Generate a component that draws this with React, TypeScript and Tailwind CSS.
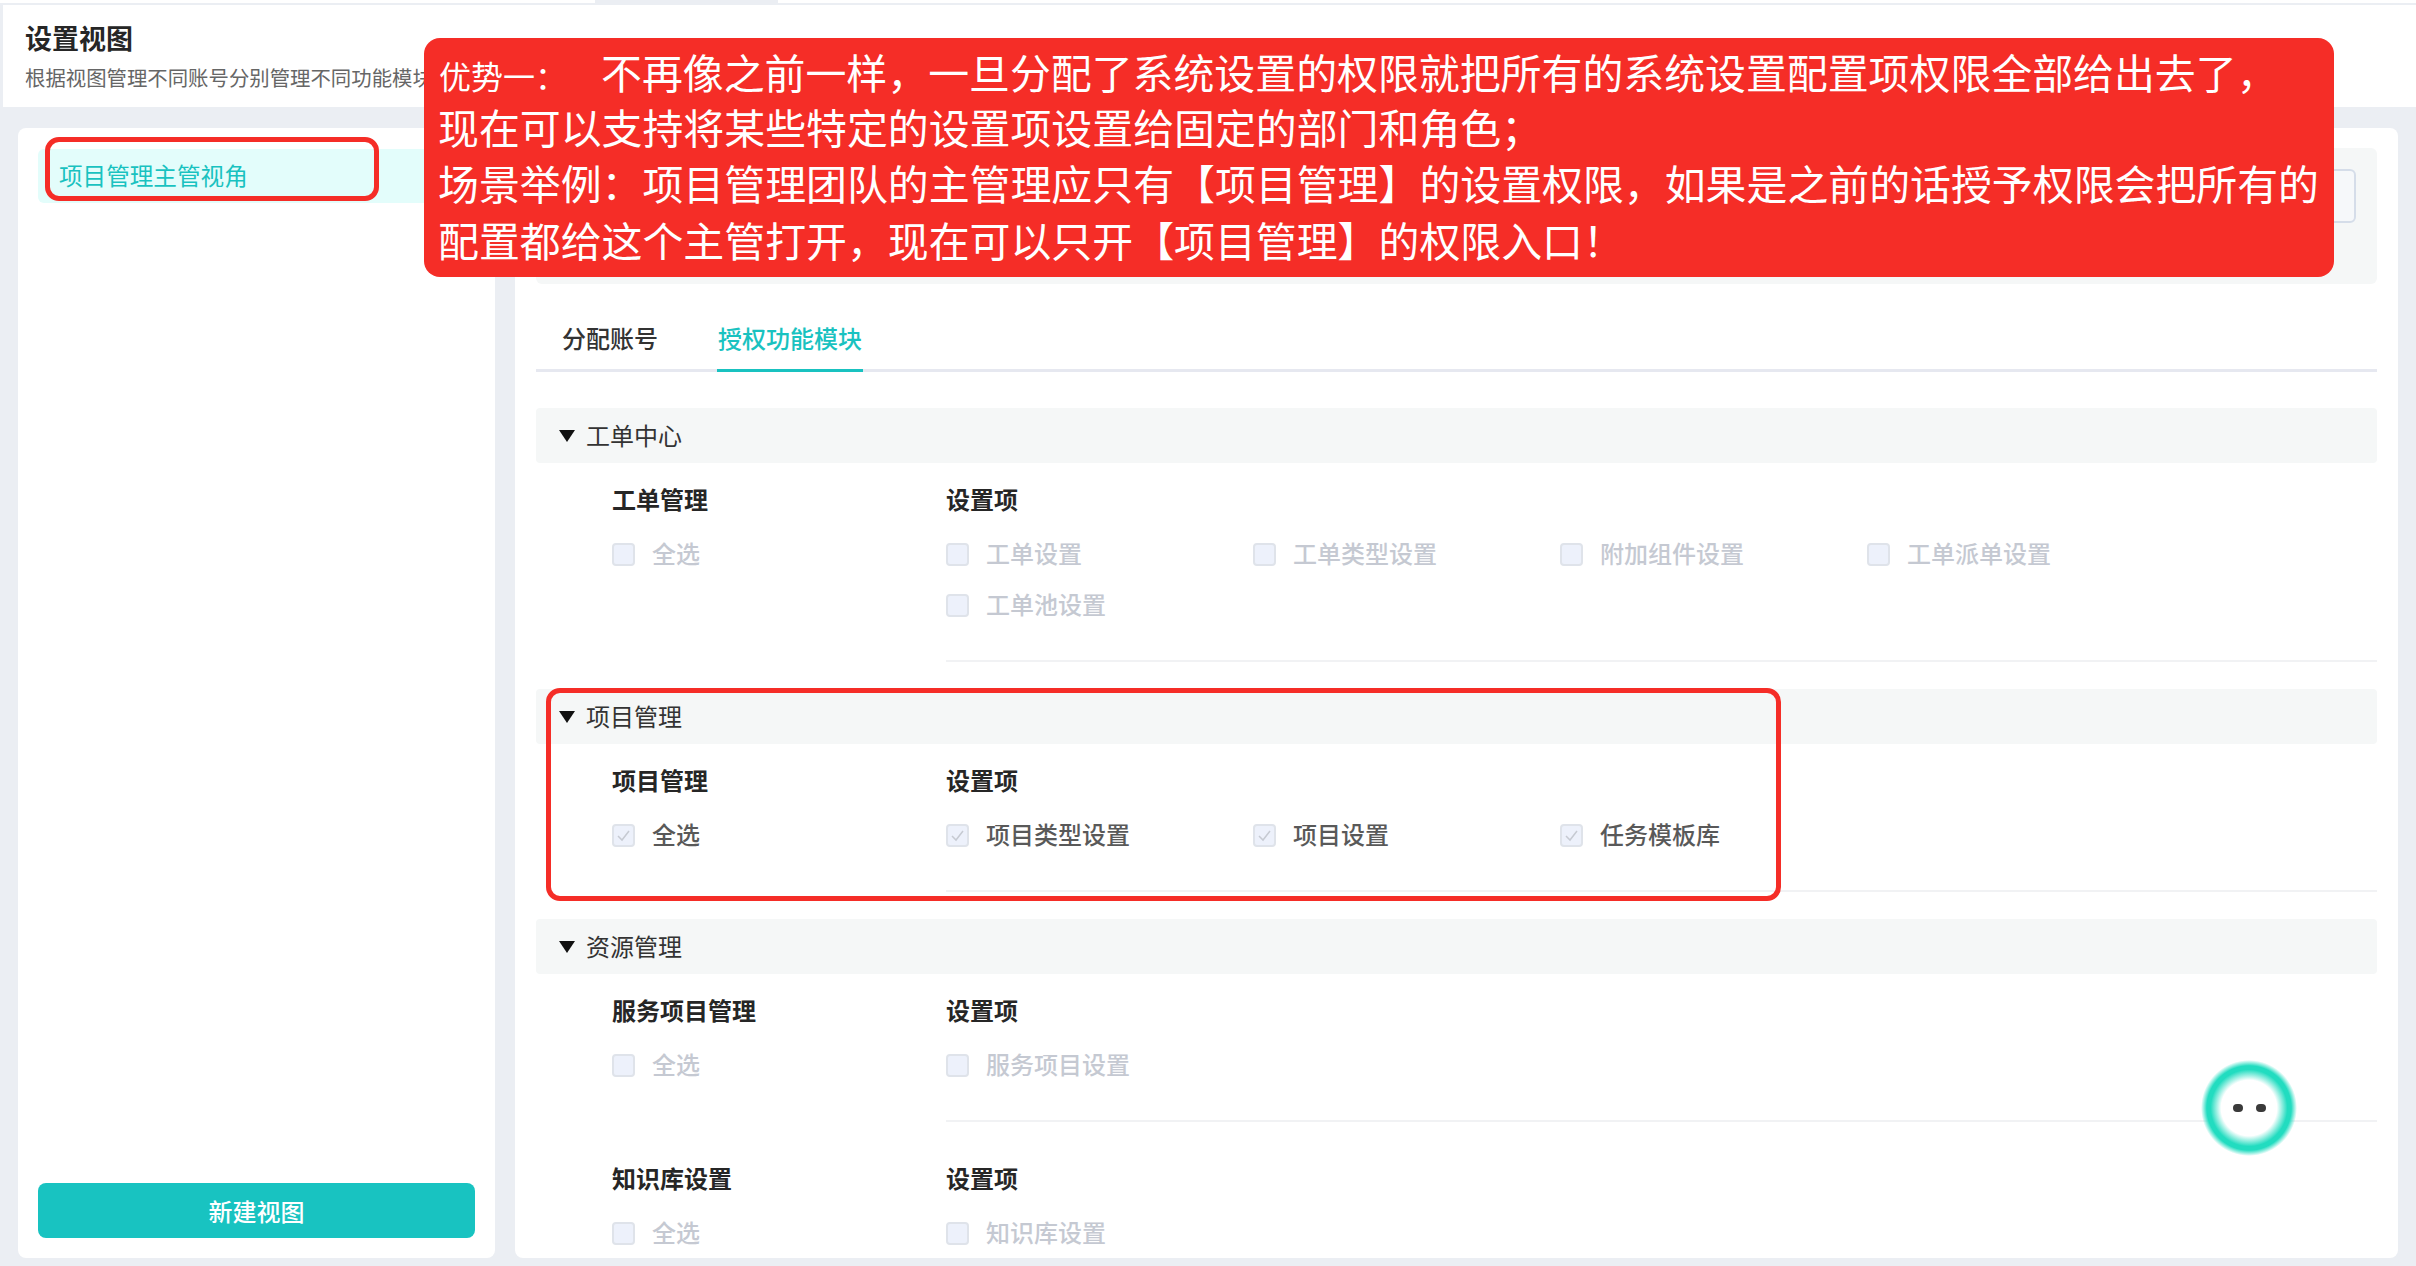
const sans = '"Noto Sans CJK SC", "Noto Sans", sans-serif';

function Check({ label, checked }: { label: string; checked: boolean }) {
  return (
    <div className="flex h-[51px] w-[307px] items-center">
      <span className="flex h-[23px] w-[23px] items-center justify-center rounded-[4px] border-2 border-[#dfe3ea] bg-[#edf1fb]">
        {checked && (
          <svg width="15" height="13" viewBox="0 0 15 13" fill="none">
            <path d="M2 7l4 4 7-9" stroke="#c6cad2" strokeWidth="1.5" />
          </svg>
        )}
      </span>
      <span className={`ml-[17px] pb-[3px] text-[24px] font-medium leading-[36px] ${checked ? 'text-[#595959]' : 'text-[#c5c9d2]'}`}>{label}</span>
    </div>
  );
}

function Block({
  name,
  items,
  checked,
  top = 18,
  pb = 29,
}: {
  name: string;
  items: string[];
  checked: boolean;
  top?: number;
  pb?: number;
}) {
  return (
    <div className={top === 18 ? 'mt-[18px] flex pl-[76px]' : 'mt-[38px] flex pl-[76px]'}>
      <div className="w-[334px] shrink-0">
        <div className="h-[36px] text-[24px] font-semibold leading-[36px] text-[#262626]">{name}</div>
        <div className="mt-[12px]">
          <Check label="全选" checked={checked} />
        </div>
      </div>
      <div className="flex-1">
        <div className="h-[36px] text-[24px] font-semibold leading-[36px] text-[#262626]">设置项</div>
        <div className={pb === 29 ? 'mt-[12px] flex flex-wrap border-b-2 border-[#f1f2f4] pb-[29px]' : 'mt-[12px] flex flex-wrap'}>
          {items.map((t) => (
            <Check key={t} label={t} checked={checked} />
          ))}
        </div>
      </div>
    </div>
  );
}

function SectionBar({ title }: { title: string }) {
  return (
    <div className="flex h-[55px] items-center rounded-[4px] bg-[#f5f7f7] pl-[23px]">
      <svg width="16" height="12" viewBox="0 0 16 12" className="shrink-0">
        <path d="M0 0h16L8 12z" fill="#111" />
      </svg>
      <span className="ml-[11px] pb-[2px] text-[24px] leading-[36px] text-[#333]">{title}</span>
    </div>
  );
}

export default function App() {
  return (
    <div className="relative flex h-[1266px] w-[2416px] flex-col overflow-hidden bg-[#ebeef3]" style={{ fontFamily: sans }}>
      <div className="flex h-[5px] shrink-0">
        <div className="h-[3px] w-[595px] bg-white" />
        <div className="h-[3px] w-[183px]" />
        <div className="h-[3px] flex-1 bg-white" />
      </div>
      <header className="ml-[3px] flex h-[102px] shrink-0 flex-col bg-white pl-[22px] pt-[13px]">
        <h1 className="text-[27px] font-semibold leading-[40px] text-[#262626]">设置视图</h1>
        <p className="mt-[4px] text-[20.4px] leading-[30px] text-[#666]">根据视图管理不同账号分别管理不同功能模块</p>
      </header>
      <div className="flex min-h-0 flex-1 gap-[20px] pb-[8px] pl-[18px] pr-[18px] pt-[21px]">
        <aside className="flex w-[477px] shrink-0 flex-col justify-between rounded-[8px] bg-white px-[20px] pb-[20px] pt-[21px]">
          <div className="flex h-[54px] items-center rounded-[6px] bg-[#e3fdfb] pl-[21px] text-[23.6px] text-[#19c2c0]">项目管理主管视角</div>
          <button className="h-[55px] rounded-[8px] bg-[#18c3c1] text-[24px] font-medium text-white">新建视图</button>
        </aside>
        <main className="min-w-0 flex-1 overflow-hidden rounded-[8px] bg-white px-[21px] pt-[20px]">
          <div className="flex h-[136px] items-start justify-end rounded-[6px] bg-[#f5f7f7] pr-[21px] pt-[21px]">
            <div className="h-[54px] w-[400px] rounded-[6px] border-2 border-[#d5dde9] bg-[#f6f8fa]" />
          </div>
          <div className="mt-[27px] flex h-[61px] items-stretch border-b-[3px] border-[#e6e8f0]">
            <div className="ml-[26px] flex w-[155px] items-center pb-[4px] text-[24px] font-medium text-[#333]">分配账号</div>
            <div className="-mb-[3px] flex w-[146px] items-center justify-center border-b-[3px] border-[#19c2c0] pb-[4px] text-[24px] font-medium text-[#19c2c0]">授权功能模块</div>
          </div>
          <div className="mt-[36px]">
            <SectionBar title="工单中心" />
            <Block name="工单管理" items={['工单设置', '工单类型设置', '附加组件设置', '工单派单设置', '工单池设置']} checked={false} />
          </div>
          <div className="mt-[27px]">
            <SectionBar title="项目管理" />
            <Block name="项目管理" items={['项目类型设置', '项目设置', '任务模板库']} checked />
          </div>
          <div className="mt-[27px]">
            <SectionBar title="资源管理" />
            <Block name="服务项目管理" items={['服务项目设置']} checked={false} />
            <Block name="知识库设置" items={['知识库设置']} checked={false} top={40} pb={0} />
          </div>
        </main>
      </div>

      {/* annotation overlays */}
      <div className="absolute left-[45px] top-[137px] h-[64px] w-[334px] rounded-[14px] border-[5px] border-[#f52d27]" />
      <div className="absolute left-[546px] top-[688px] h-[213px] w-[1235px] rounded-[14px] border-[5px] border-[#f52d27]" />
      <div className="absolute left-[424px] top-[38px] h-[239px] w-[1910px] rounded-[16px] bg-[#f52d27] pl-[14px] pt-[6px] text-[40.9px] leading-[56.4px] text-white">
        <div className="h-[55px] whitespace-nowrap leading-[55px]">
          <span className="inline-block w-[163px] pl-[1px] text-[32px] leading-[40px]">优势一：</span>不再像之前一样，一旦分配了系统设置的权限就把所有的系统设置配置项权限全部给出去了，
        </div>
        <div className="whitespace-nowrap">现在可以支持将某些特定的设置项设置给固定的部门和角色；</div>
        <div className="whitespace-nowrap">场景举例：项目管理团队的主管理应只有【项目管理】的设置权限，如果是之前的话授予权限会把所有的</div>
        <div className="whitespace-nowrap">配置都给这个主管打开，现在可以只开【项目管理】的权限入口！</div>
      </div>

      {/* floating assistant */}
      <div className="absolute left-[2201px] top-[1060px] flex h-[96px] w-[96px] items-center justify-center gap-[13px] rounded-full bg-[radial-gradient(circle_closest-side,#ffffff_58%,#22dcc0_80%,#22dcc0_88%,transparent_100%)]">
        <span className="h-[8px] w-[10px] rounded-full bg-[#3a3a3a]" />
        <span className="h-[8px] w-[10px] rounded-full bg-[#3a3a3a]" />
      </div>
    </div>
  );
}
